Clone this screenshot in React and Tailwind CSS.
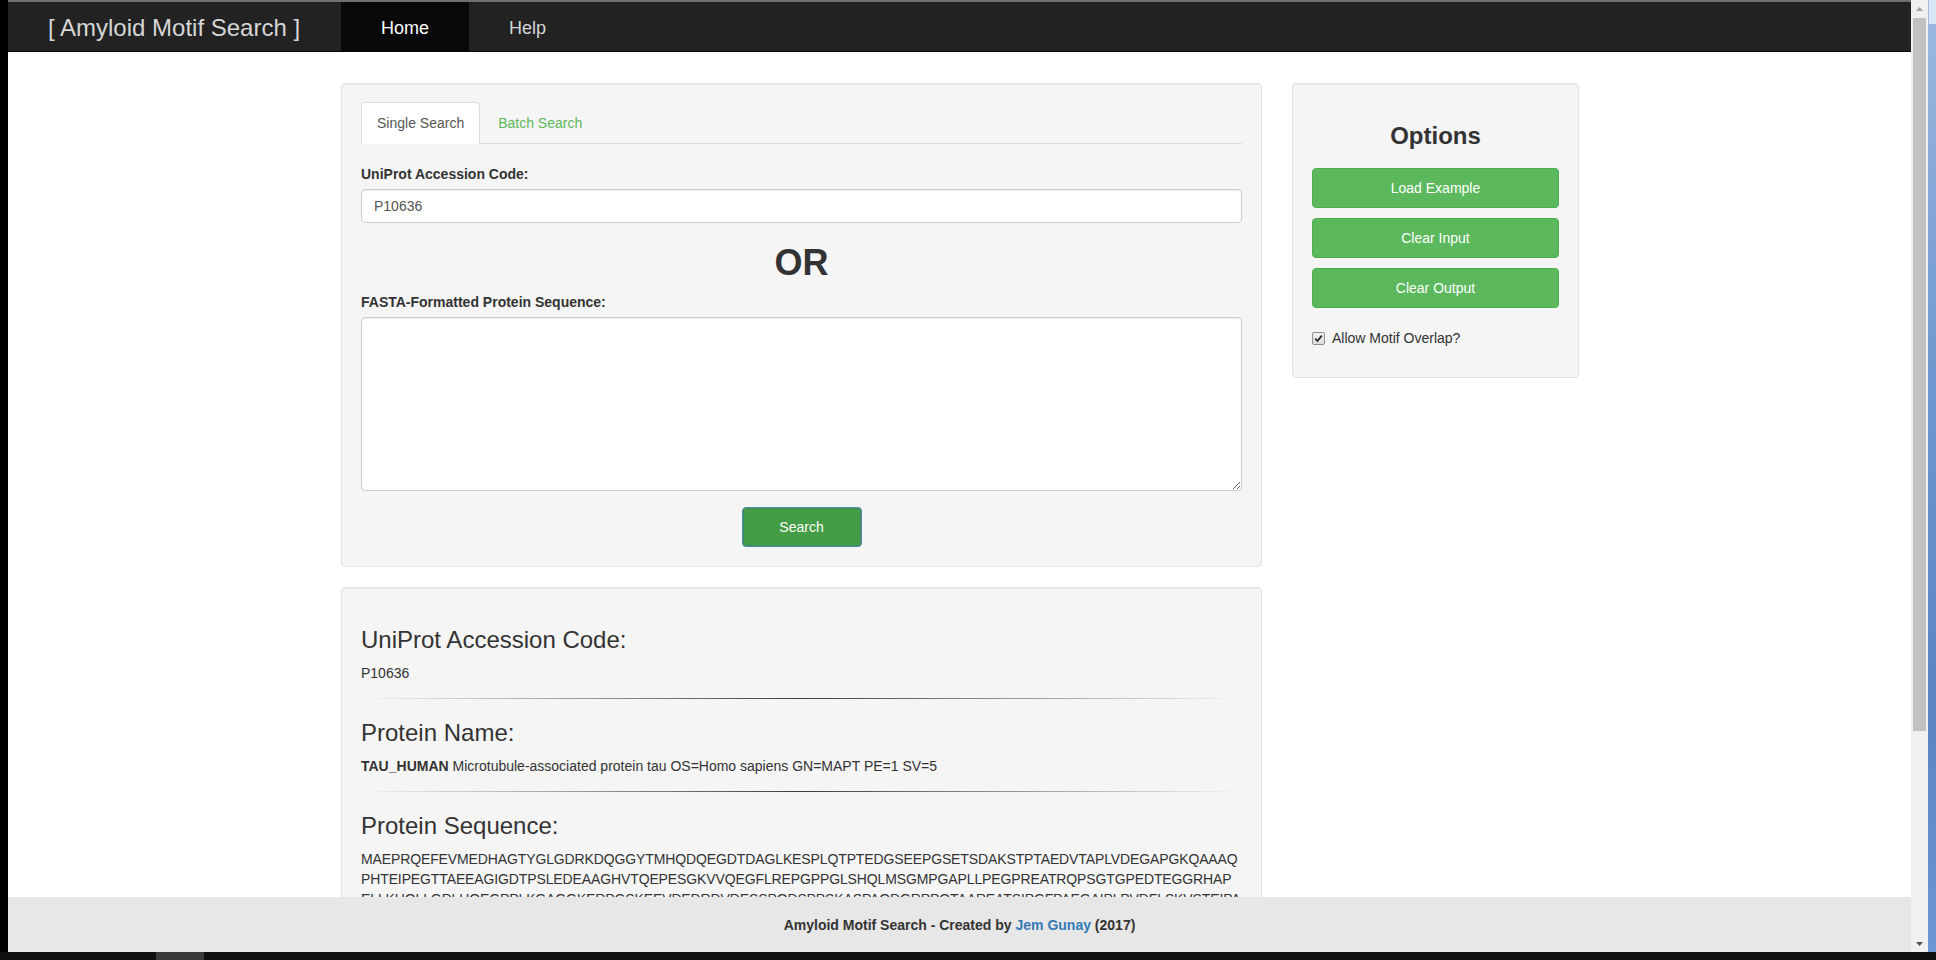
const SEQ_LINES = [
  "MAEPRQEFEVMEDHAGTYGLGDRKDQGGYTMHQDQEGDTDAGLKESPLQTPTEDGSEEPGSETSDAKSTPTAEDVTAPLVDEGAPGKQAAAQ",
  "PHTEIPEGTTAEEAGIGDTPSLEDEAAGHVTQEPESGKVVQEGFLREPGPPGLSHQLMSGMPGAPLLPEGPREATRQPSGTGPEDTEGGRHAP",
  "ELLKHQLLGDLHQEGPPLKGAGGKERPGSKEEVDEDRDVDESSPQDSPPSKASPAQDGRPPQTAAREATSIPGFPAEGAIPLPVDFLSKVSTEIPA",
];

function Hr() {
  return (
    <div className="mt-[15px] h-px bg-[linear-gradient(to_right,rgba(0,0,0,0),rgba(0,0,0,0.75),rgba(0,0,0,0))]" />
  );
}

const well =
  "bg-[#f5f5f5] border border-[#e3e3e3] rounded-[4px] shadow-[inset_0_1px_1px_rgba(0,0,0,0.05)]";

function GreenButton({ children }) {
  return (
    <div className="h-[40px] flex items-center justify-center bg-[#5cb85c] border border-[#4cae4c] rounded-[4px] text-white text-[14px]">
      {children}
    </div>
  );
}

export default function App() {
  return (
    <div className="w-[1936px] h-[960px] overflow-hidden bg-black flex flex-col font-[family-name:'Liberation_Sans',Arial,sans-serif] text-[14px] leading-[20px] text-[#333]">
      <div className="flex h-[952px] shrink-0">
        <div className="w-[8px] shrink-0 bg-black" />

        {/* Browser page */}
        <div className="w-[1903px] shrink-0 flex flex-col bg-white overflow-hidden">
          {/* Navbar */}
          <div className="h-[52px] shrink-0 flex flex-col">
            <div className="h-[2px] bg-[#6f6f6f]" />
            <div className="flex-1 flex bg-[#222] border-b border-[#080808]">
              <div className="w-[333px] shrink-0 flex items-center pl-[40px] pt-[3px] text-[24px] text-[#d6d6d6]">
                [ Amyloid Motif Search ]
              </div>
              <div className="flex text-[18px]">
                <div className="px-[40px] flex items-center pt-[2px] bg-[#080808] text-white">Home</div>
                <div className="px-[40px] flex items-center pt-[2px] text-[#d6d6d6]">Help</div>
              </div>
            </div>
          </div>

          {/* Main */}
          <div className="flex-1 min-h-0 overflow-hidden">
            <div className="flex items-start gap-[30px] pl-[333px] pt-[31px]">
              {/* Left column */}
              <div className="w-[921px] shrink-0 flex flex-col">
                <div className={`${well} px-[19px] pt-[18px] pb-[19px]`}>
                  <div className="flex h-[42px] border-b border-[#ddd]">
                    <div className="h-[42px] mr-[2px] px-[15px] flex items-center bg-white border border-[#ddd] border-b-transparent rounded-t-[4px] text-[#555]">
                      Single Search
                    </div>
                    <div className="h-[41px] px-[16px] flex items-center text-[#5cb85c]">Batch Search</div>
                  </div>

                  <div className="mt-[20px] font-bold">UniProt Accession Code:</div>
                  <input
                    defaultValue="P10636"
                    className="mt-[5px] block w-full h-[34px] px-[12px] bg-white border border-[#ccc] rounded-[4px] text-[#555] shadow-[inset_0_1px_1px_rgba(0,0,0,0.075)] outline-none"
                  />

                  <div className="mt-[20px] h-[40px] leading-[40px] text-center text-[36px] font-bold text-[#333]">OR</div>

                  <div className="mt-[9px] font-bold">FASTA-Formatted Protein Sequence:</div>
                  <textarea className="mt-[5px] block w-full h-[174px] bg-white border border-[#ccc] rounded-[4px] shadow-[inset_0_1px_1px_rgba(0,0,0,0.075)] outline-none" />

                  <div className="mt-[16px] flex justify-center">
                    <div className="w-[120px] h-[40px] flex items-center justify-center bg-[#449d44] border border-[#4f88b5] rounded-[4px] shadow-[inset_0_0_0_1px_#3f8f58] text-white">
                      Search
                    </div>
                  </div>
                </div>

                <div className={`${well} mt-[20px] px-[19px] pt-[19px] pb-[19px]`}>
                  <h3 className="mt-[20px] text-[24px] leading-[26px]">UniProt Accession Code:</h3>
                  <p className="mt-[10px]">P10636</p>
                  <Hr />
                  <h3 className="mt-[21px] text-[24px] leading-[26px]">Protein Name:</h3>
                  <p className="mt-[10px]">
                    <span className="font-bold">TAU_HUMAN</span> Microtubule-associated protein tau OS=Homo sapiens
                    GN=MAPT PE=1 SV=5
                  </p>
                  <Hr />
                  <h3 className="mt-[21px] text-[24px] leading-[26px]">Protein Sequence:</h3>
                  <div className="mt-[10px] tracking-[-0.12px]">
                    {SEQ_LINES.map((line) => (
                      <div key={line} className="whitespace-nowrap">
                        {line}
                      </div>
                    ))}
                  </div>
                </div>
              </div>

              {/* Right column */}
              <div className={`${well} w-[287px] shrink-0 px-[19px] pt-[19px] pb-[19px]`}>
                <h3 className="mt-[20px] text-[24px] leading-[26px] font-bold text-center">Options</h3>
                <div className="mt-[19px] flex flex-col gap-[10px]">
                  <GreenButton>Load Example</GreenButton>
                  <GreenButton>Clear Input</GreenButton>
                  <GreenButton>Clear Output</GreenButton>
                </div>
                <div className="mt-[20px] mb-[10px] h-[20px] flex items-center gap-[7px]">
                  <div className="w-[13px] h-[13px] rounded-[2px] border border-[#8f8f8f] bg-[linear-gradient(#f4f4f4,#dcdcdc)] flex items-center justify-center">
                    <svg width="9" height="9" viewBox="0 0 9 9">
                      <path d="M1.2 4.6 L3.5 7 L7.8 1.6" fill="none" stroke="#222" strokeWidth="1.7" />
                    </svg>
                  </div>
                  <span>Allow Motif Overlap?</span>
                </div>
              </div>
            </div>
          </div>

          {/* Footer */}
          <div className="h-[55px] shrink-0 bg-[#e7e7e7] pt-[18px] text-center font-bold text-[#333]">
            Amyloid Motif Search - Created by <span className="text-[#337ab7]">Jem Gunay</span> (2017)
          </div>
        </div>

        {/* Scrollbar */}
        <div className="w-[17px] shrink-0 bg-[#f0f0f0] flex flex-col items-center">
          <div className="h-[17px] flex items-center justify-center">
            <svg width="7" height="4" viewBox="0 0 7 4">
              <path d="M0 4 L3.5 0 L7 4 Z" fill="#a3a3a3" />
            </svg>
          </div>
          <div className="mt-[1px] w-[13px] h-[713px] bg-[#c1c1c1]" />
          <div className="flex-1" />
          <div className="h-[17px] flex items-center justify-center">
            <svg width="7" height="4" viewBox="0 0 7 4">
              <path d="M0 0 L7 0 L3.5 4 Z" fill="#505050" />
            </svg>
          </div>
        </div>

        {/* Desktop edge */}
        <div className="w-[8px] shrink-0 flex flex-col bg-[linear-gradient(#9db9e0,#6f97cf_40%,#5a84c2_75%,#6c96d4)]">
          <div className="h-[24px] bg-[#d9e6f5] border-l border-[#aac0dc]" />
        </div>
      </div>

      {/* Taskbar */}
      <div className="h-[8px] shrink-0 flex bg-[#101010]">
        <div className="w-[156px] shrink-0" />
        <div className="w-[48px] shrink-0 bg-[#3a3a3a]" />
      </div>
    </div>
  );
}
